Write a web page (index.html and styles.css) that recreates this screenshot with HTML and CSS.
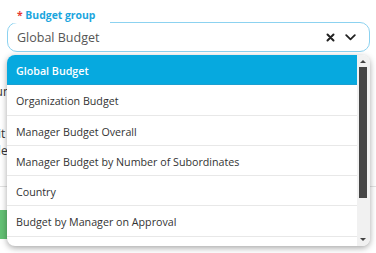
FILE: index.html
```html
<!DOCTYPE html>
<html lang="en">
<head>
  <meta charset="UTF-8">
  <meta name="viewport" content="width=device-width, initial-scale=1">
  <title>Budget group</title>
  <link rel="stylesheet" href="styles.css">
</head>
<body>
  <div class="page">
    <div class="field">
      <label class="field_label"><span class="req">*</span> Budget group</label>
      <span class="field_value">Global Budget</span>
      <span class="field_icons">
        <svg class="ico" width="9" height="9" viewBox="0 0 9 9"><path d="M1.5 1.5 L7.5 7.5 M7.5 1.5 L1.5 7.5" stroke="#222" stroke-width="2" stroke-linecap="round"/></svg>
        <svg class="ico" width="11" height="7" viewBox="0 0 11 7"><path d="M1.2 1.2 L5.5 5.4 L9.8 1.2" fill="none" stroke="#222" stroke-width="1.8" stroke-linecap="round" stroke-linejoin="round"/></svg>
      </span>
    </div>

    <!-- form behind the open menu -->
    <div class="behind">
      <div class="behind_line l1">Sum</div>
      <div class="behind_line l2">Edit</div>
      <div class="behind_line l3">Ade</div>
      <div class="behind_rule"></div>
      <div class="behind_btn"></div>
    </div>

    <div class="menu">
      <ul class="menu_list">
        <li class="menu_item active">Global Budget</li>
        <li class="menu_item">Organization Budget</li>
        <li class="menu_item">Manager Budget Overall</li>
        <li class="menu_item">Manager Budget by Number of Subordinates</li>
        <li class="menu_item">Country</li>
        <li class="menu_item">Budget by Manager on Approval</li>
        <li class="menu_item">Budget by Country</li>
      </ul>
      <div class="scroll">
        <span class="arrow up"></span>
        <span class="thumb"></span>
        <span class="arrow down"></span>
      </div>
    </div>
  </div>
</body>
</html>
```

FILE: styles.css
```css
*{
  box-sizing: border-box;
  margin: 0;
  padding: 0;
}
body{
  background: #fff;
  font-family: "Open Sans", "Noto Sans", sans-serif;
  color: #333;
}
.page{
  position: relative;
  width: 376px;
  height: 253px;
  overflow: hidden;
}

.field{
  position: relative;
  display: flex;
  align-items: center;
  margin: 22px 6px 0 7px;
  height: 30px;
  border: 1px solid #8cd2f0;
  border-radius: 10px;
  padding: 0 13px 0 9px;
}
.field_label{
  position: absolute;
  top: -16px;
  left: 3px;
  background: #fff;
  padding: 0 15px 0 6px;
  font-size: 10.4px;
  font-weight: 700;
  line-height: 16px;
  color: #1ba6de;
}
.req{
  color: #e53935;
}
.field_value{
  flex: 1;
  font-size: 12.5px;
  color: #555;
}
.field_icons{
  display: flex;
  align-items: center;
  gap: 10px;
}
.ico{
  display: block;
}

.behind{
  font-size: 12px;
  color: #333;
}
.behind_line{
  height: 16px;
  line-height: 16px;
}
.l1{ margin-top: 32px; margin-left: -11px; }
.l2{ margin-top: 26px; margin-left: -16px; }
.l3{ margin-top: 1px; margin-left: -14px; }
.behind_rule{
  margin-top: 27px;
  height: 1px;
  background: #e2e2e2;
}
.behind_btn{
  margin-top: 23px;
  width: 60px;
  height: 29px;
  background: #63c174;
}

.menu{
  position: absolute;
  top: 55px;
  left: 7px;
  width: 363px;
  height: 191px;
  display: flex;
  background: #fff;
  border-radius: 8px;
  overflow: hidden;
  box-shadow: 0 2px 6px rgba(0,0,0,0.35);
}
.menu_list{
  flex: 1;
  list-style: none;
}
.menu_item{
  height: 30.3px;
  line-height: 28px;
  padding: 2px 0 0 9px;
  font-size: 10.7px;
  color: #333;
  border-bottom: 1px solid #e8e8e8;
  white-space: nowrap;
}
.menu_item.active{
  background: #06a9df;
  color: #fff;
  font-weight: 600;
  border-bottom-color: #1b9fd0;
}
.scroll{
  position: relative;
  width: 13px;
  background: #f1f1f1;
}
.thumb{
  position: absolute;
  top: 12px;
  left: 2px;
  width: 8px;
  height: 131px;
  background: #454545;
}
.arrow{
  position: absolute;
  left: 3px;
  width: 0;
  height: 0;
  border-left: 3px solid transparent;
  border-right: 3px solid transparent;
}
.arrow.up{
  top: 5px;
  border-bottom: 3px solid #444;
}
.arrow.down{
  bottom: 5px;
  border-top: 3px solid #444;
}
```
